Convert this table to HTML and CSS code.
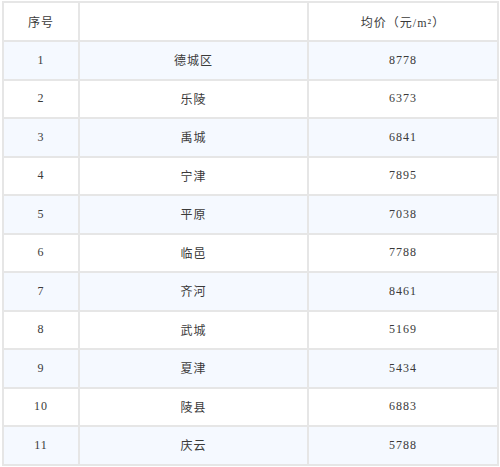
FILE: index.html
```html
<!DOCTYPE html>
<html>
<head>
<meta charset="utf-8">
<link rel="stylesheet" href="styles.css">
</head>
<body>
<table class="price-table">
  <colgroup>
    <col class="c-idx">
    <col class="c-name">
    <col class="c-price">
  </colgroup>
  <thead>
    <tr class="head"><td>序号</td><td></td><td>均价（元/m²）</td></tr>
  </thead>
  <tbody>
    <tr class="odd"><td>1</td><td>德城区</td><td>8778</td></tr>
    <tr><td>2</td><td>乐陵</td><td>6373</td></tr>
    <tr class="odd"><td>3</td><td>禹城</td><td>6841</td></tr>
    <tr><td>4</td><td>宁津</td><td>7895</td></tr>
    <tr class="odd"><td>5</td><td>平原</td><td>7038</td></tr>
    <tr><td>6</td><td>临邑</td><td>7788</td></tr>
    <tr class="odd"><td>7</td><td>齐河</td><td>8461</td></tr>
    <tr><td>8</td><td>武城</td><td>5169</td></tr>
    <tr class="odd"><td>9</td><td>夏津</td><td>5434</td></tr>
    <tr><td>10</td><td>陵县</td><td>6883</td></tr>
    <tr class="odd"><td>11</td><td>庆云</td><td>5788</td></tr>
  </tbody>
</table>
</body>
</html>
```
FILE: styles.css
```css
html, body {
  margin: 0;
  padding: 0;
  background: #ffffff;
}
body {
  padding: 1px 0 0 2px;
}
.price-table {
  border-collapse: collapse;
  table-layout: fixed;
  width: 495px;
  font-family: "Liberation Serif", "Noto Sans CJK SC", serif;
  font-size: 12px;
  color: #3a3a3a;
}
.c-idx { width: 76px; }
.c-name { width: 229px; }
.c-price { width: 190px; }
.price-table td {
  border: 2px solid #e6e6e6;
  text-align: center;
  vertical-align: middle;
  padding: 0;
  height: 38.5px;
  box-sizing: border-box;
  letter-spacing: 1px;
}
.price-table .head td {
  height: 39px;
  background: #ffffff;
}
.price-table tr.odd td {
  background: #f5f9ff;
}
```
